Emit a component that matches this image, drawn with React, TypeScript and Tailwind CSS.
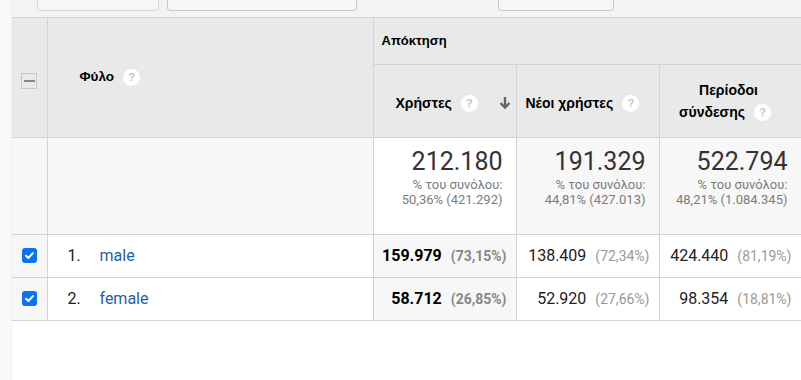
import React from "react";

const Help = () => (
  <span className="inline-flex items-center justify-center w-[17px] h-[17px] rounded-full bg-white text-[11px] font-bold text-[#c4c4c4] align-middle ml-[9px] leading-none">
    ?
  </span>
);

const Check = () => (
  <span className="inline-flex items-center justify-center w-[15px] h-[15px] rounded-[3px] bg-[#0b72f0]">
    <svg width="11" height="11" viewBox="0 0 12 12">
      <path d="M2.2 6.3l2.5 2.5 5-5.4" fill="none" stroke="white" strokeWidth="2.2" strokeLinecap="round" strokeLinejoin="round" />
    </svg>
  </span>
);

const totals = [
  { v: "212.180", p: "50,36% (421.292)", bg: "bg-white" },
  { v: "191.329", p: "44,81% (427.013)", bg: "bg-[#f7f7f7]" },
  { v: "522.794", p: "48,21% (1.084.345)", bg: "bg-[#f7f7f7]" },
];

const rows = [
  { n: "1.", name: "male", cells: [["159.979", "(73,15%)"], ["138.409", "(72,34%)"], ["424.440", "(81,19%)"]] },
  { n: "2.", name: "female", cells: [["58.712", "(26,85%)"], ["52.920", "(27,66%)"], ["98.354", "(18,81%)"]] },
];

const bd = "border border-[#d3d3d3]";
const arial = "font-['Liberation_Sans',Arial,sans-serif]";
const roboto = "font-['Roboto','Liberation_Sans',sans-serif]";

export default function App() {
  return (
    <div className="flex w-[801px] h-[380px] bg-white overflow-hidden">
      <div className="w-[12px] shrink-0 bg-[#f8f9fa] border-r border-[#eceef0]" />
      <div className="flex-1 flex flex-col">
        {/* toolbar (cut off) */}
        <div className="h-[18px] shrink-0 bg-[#f3f3f3] border-b border-[#d3d3d3] flex items-start gap-[8px] pl-[25px]">
          <div className="w-[122px] h-[11px] border border-t-0 border-[#d6d6d6] rounded-b-[4px] bg-[#f6f6f6]" />
          <div className="w-[190px] h-[11px] border border-t-0 border-[#c9c9c9] rounded-b-[4px] bg-[#f6f6f6]" />
          <div className="w-[125px]" />
          <div className="w-[116px] h-[11px] border border-t-0 border-[#c9c9c9] rounded-b-[4px] bg-[#f6f6f6]" />
        </div>

        <table className={`border-collapse table-fixed w-[789px] text-[#222] ${arial}`}>
          <colgroup>
            <col className="w-[35px]" />
            <col className="w-[326px]" />
            <col className="w-[143px]" />
            <col className="w-[143px]" />
            <col className="w-[142px]" />
          </colgroup>
          <thead>
            <tr className="h-[46px] bg-[#e9e9e9]">
              <td rowSpan={2} className={`${bd} border-t-0 border-l-0 text-center align-middle`}>
                <span className="inline-flex items-center justify-center w-[16px] h-[16px] border border-[#c8c8c8] bg-[#e9e9e9]">
                  <span className="w-[11px] h-[2px] bg-[#888]" />
                </span>
              </td>
              <td rowSpan={2} className={`${bd} border-t-0 pl-[32px] text-[13.5px] font-bold text-black`}>
                Φύλο
                <Help />
              </td>
              <td colSpan={3} className={`${bd} border-t-0 pl-[8px] text-[13px] font-bold text-black`}>
                Απόκτηση
              </td>
            </tr>
            <tr className="h-[73px] bg-[#e9e9e9]">
              <td className={`${bd} text-[14px] font-bold text-black`}>
                <div className="flex items-center pl-[22px] pr-[5px] pt-[5px]">
                  <span>Χρήστες</span>
                  <Help />
                  <svg className="ml-auto" width="12" height="14" viewBox="0 0 12 14">
                    <path d="M6 1v10M1.5 7l4.5 4.5L10.5 7" fill="none" stroke="#666" strokeWidth="2.4" />
                  </svg>
                </div>
              </td>
              <td className={`${bd} text-[14px] font-bold text-black`}>
                <div className="flex items-center pl-[9px] pt-[5px]">
                  <span>Νέοι χρήστες</span>
                  <Help />
                </div>
              </td>
              <td className={`${bd} text-[14px] font-bold text-black text-center leading-[22px]`}>
                <div className="pr-[3px]">Περίοδοι</div>
                <div className="pr-[10px]">
                  σύνδεσης
                  <Help />
                </div>
              </td>
            </tr>
          </thead>
          <tbody>
            <tr className="h-[97px] bg-[#f7f7f7]">
              <td className={`${bd} border-l-0`} />
              <td className={bd} />
              {totals.map((t) => (
                <td key={t.v} className={`${bd} ${t.bg} text-right pr-[13px] align-top pt-[10px] ${roboto}`}>
                  <div className="text-[25px] leading-[28px] text-[#333]">{t.v}</div>
                  <div className="text-[13px] leading-[15px] text-[#7c7c7c] mt-[1px]">% του συνόλου:</div>
                  <div className="text-[13px] leading-[15px] text-[#7c7c7c]">{t.p}</div>
                </td>
              ))}
            </tr>
            {rows.map((r) => (
              <tr key={r.name} className="h-[43px] bg-white">
                <td className={`${bd} border-l-0 bg-[#f7f7f7] text-center align-middle`}>
                  <Check />
                </td>
                <td className={`${bd} pl-[20px] ${roboto} text-[16px]`}>
                  <span className="inline-block w-[32px] text-[#222]">{r.n}</span>
                  <span className="text-[#1f5fa8]">{r.name}</span>
                </td>
                {r.cells.map(([v, p], i) => (
                  <td
                    key={i}
                    className={`${bd} text-right pr-[9px] ${roboto} whitespace-nowrap ${i === 0 ? "bg-[#f7f7f7]" : "bg-white"}`}
                  >
                    <span className={`text-[16px] ${i === 0 ? "font-bold text-black" : "text-[#222]"}`}>{v}</span>
                    <span className={`text-[14px] ml-[9px] ${i === 0 ? "font-bold text-[#888]" : "text-[#999]"}`}>{p}</span>
                  </td>
                ))}
              </tr>
            ))}
          </tbody>
        </table>
      </div>
    </div>
  );
}
